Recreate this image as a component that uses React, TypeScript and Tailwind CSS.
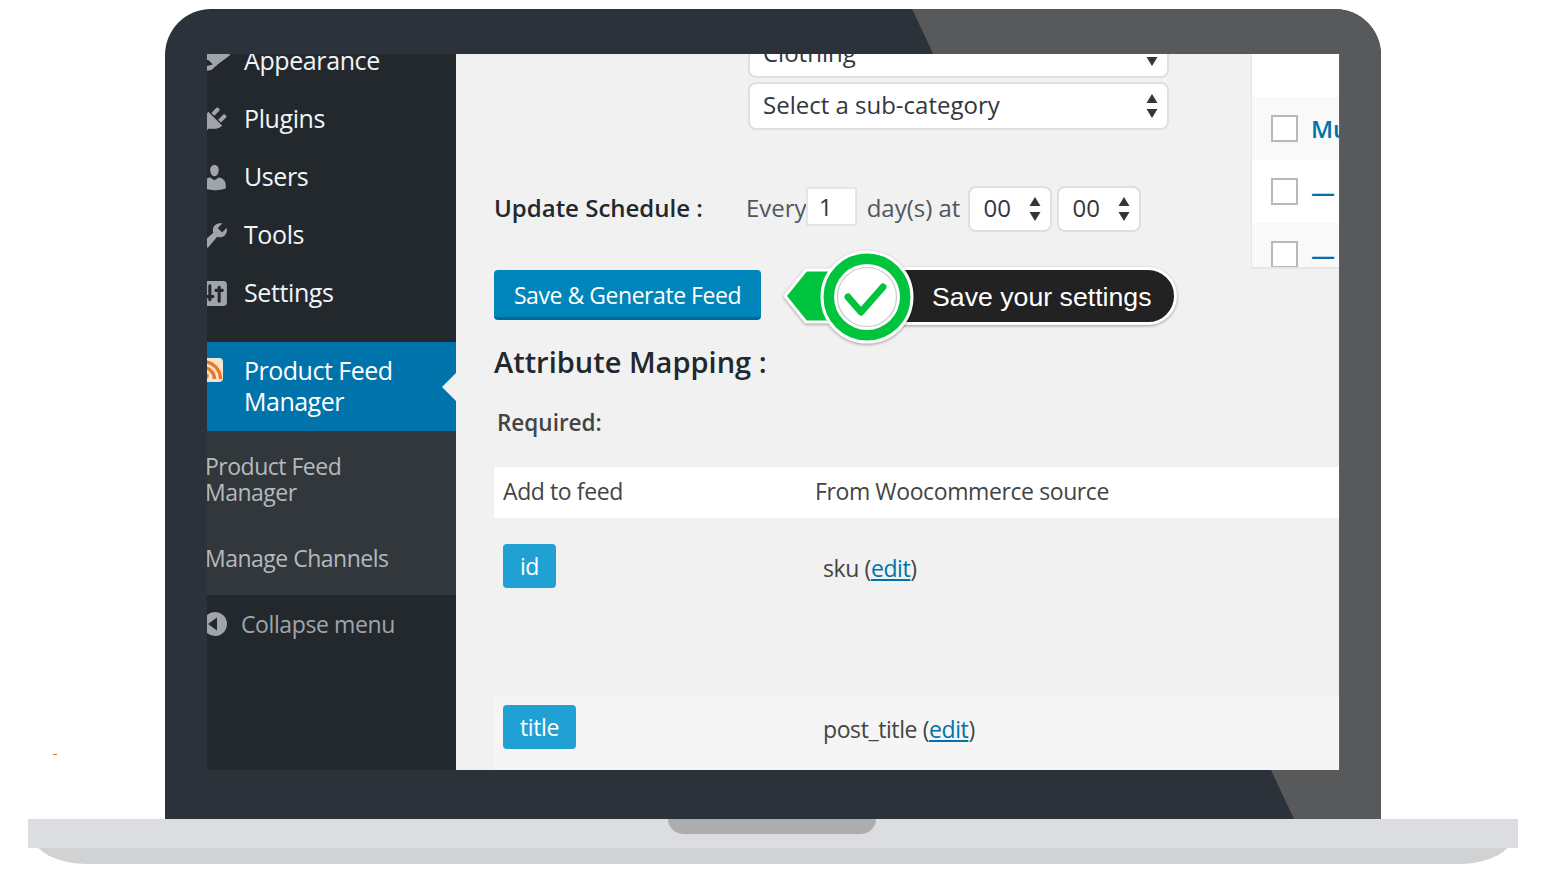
function Icon({ d, className }: { d: string; className: string }) {
  return (
    <svg viewBox="0 0 20 20" className={className} fill="#a0a5aa">
      <path d={d} />
    </svg>
  );
}

const menuItems = [
  {
    label: "Appearance",
    d: "M5 4h15v2l-8 6-4 3.5-3 .5v-3l4-1-3-3H5z",
  },
  {
    label: "Plugins",
    d: "M13.11 4.36L9.87 7.6 8 5.73l3.24-3.24c.35-.34 1.05-.2 1.56.32.52.51.66 1.21.31 1.55zm-8 1.77l.91-1.12 9.01 9.01-1.19.84c-.71.71-2.63 1.16-3.82 1.16H6.14L4.9 17.26c-.59.59-1.54.59-2.12 0-.59-.58-.59-1.53 0-2.12l1.24-1.24v-3.88c0-1.13.4-3.19 1.09-3.89zm7.26 3.97l3.24-3.24c.34-.35 1.04-.21 1.55.31.52.51.66 1.21.31 1.55l-3.24 3.25z",
  },
  {
    label: "Users",
    d: "M10 9.25c-2.27 0-2.73-3.44-2.73-3.44C7 4.02 7.82 2 9.97 2c2.16 0 2.98 2.02 2.71 3.81 0 0-.41 3.44-2.68 3.44zm0 2.57L12.72 10c2.39 0 4.52 2.33 4.52 4.53v2.49s-3.65 1.13-7.24 1.13c-3.65 0-7.24-1.13-7.24-1.13v-2.49c0-2.25 1.94-4.48 4.47-4.48z",
  },
  {
    label: "Tools",
    d: "M16.68 9.77c-1.34 1.34-3.3 1.67-4.95.99l-5.41 6.52c-.99.99-2.59.99-3.58 0s-.99-2.59 0-3.57l6.52-5.42c-.68-1.65-.35-3.61.99-4.95 1.28-1.28 3.12-1.62 4.72-1.06l-2.89 2.89 2.82 2.82 2.86-2.87c.53 1.58.18 3.39-1.08 4.67z",
  },
  {
    label: "Settings",
    d: "M18 16V4c0-1.1-.9-2-2-2H4c-1.1 0-2 .9-2 2v12c0 1.1.9 2 2 2h12c1.1 0 2-.9 2-2zM8 11h1c.55 0 1 .45 1 1s-.45 1-1 1H8v1c0 .55-.45 1-1 1s-1-.45-1-1v-1H5c-.55 0-1-.45-1-1s.45-1 1-1h1V5c0-.55.45-1 1-1s1 .45 1 1v6zm7-2h-1v6c0 .55-.45 1-1 1s-1-.45-1-1V9h-1c-.55 0-1-.45-1-1s.45-1 1-1h1V6c0-.55.45-1 1-1s1 .45 1 1v1h1c.55 0 1 .45 1 1s-.45 1-1 1z",
  },
];

function SelectArrows({ onlyDown }: { onlyDown?: boolean }) {
  return (
    <svg viewBox="0 0 12 24" className="h-[24px] w-[12px]" fill="#32373c">
      {!onlyDown && <path d="M6 0l5.5 9H.5z" />}
      <path d="M6 24l-5.5-9h11z" />
    </svg>
  );
}

function Sidebar() {
  return (
    <aside className="flex h-[calc(100%+22px)] w-[249px] shrink-0 -mt-[22px] flex-col overflow-hidden bg-[#23282d]">
      {menuItems.map((item) => (
        <div key={item.label} className="flex h-[58px] shrink-0 items-center text-[25px] tracking-[-0.4px] text-[#f0f5fa]">
          <Icon d={item.d} className="-ml-[8px] mr-[14px] h-[31px] w-[31px] shrink-0" />
          {item.label}
        </div>
      ))}

      {/* active item */}
      <div className="relative mt-[20px] flex h-[89px] shrink-0 bg-[#0073aa] pt-[13px] text-[25px] leading-[31px] tracking-[-0.5px] text-white">
        <svg viewBox="0 0 24 24" className="-ml-[7px] mr-[20px] mt-[3px] h-[24px] w-[24px] shrink-0">
          <rect x="0" y="0" width="23" height="24" rx="4" fill="#f3e3d3" />
          <circle cx="6" cy="18" r="2.8" fill="#e8791f" />
          <path d="M3 9.5a11.5 11.5 0 0 1 11.5 11.5M3 3.5a17.5 17.5 0 0 1 17.5 17.5" fill="none" stroke="#e8791f" strokeWidth="3.4" />
        </svg>
        <div>
          Product Feed
          <br />
          Manager
        </div>
        <div className="absolute right-0 top-[31px] h-0 w-0 border-y-[14px] border-r-[14px] border-y-transparent border-r-[#f1f1f1]" />
      </div>

      <div className="flex h-[164px] shrink-0 flex-col bg-[#32373c] text-[23px] tracking-[-0.5px] text-[#b4b9be]">
        <div className="-ml-[2px] mt-[22px] leading-[26px]">
          Product Feed
          <br />
          Manager
        </div>
        <div className="-ml-[2px] mt-[37px] leading-[32px]">Manage Channels</div>
      </div>

      <div className="mt-[13px] flex h-[32px] shrink-0 items-center text-[23px] tracking-[-0.4px] text-[#a0a5aa]">
        <svg viewBox="0 0 24 24" className="-ml-[4px] mr-[14px] h-[24px] w-[24px] shrink-0">
          <circle cx="12" cy="12" r="12" fill="#a0a5aa" />
          <path d="M5 12l9-6.5v13z" fill="#23282d" />
        </svg>
        Collapse menu
      </div>
    </aside>
  );
}

function SelectBox({ label, className, onlyDown }: { label: string; className: string; onlyDown?: boolean }) {
  return (
    <div className={`flex items-center justify-between rounded-[8px] border-2 border-[#dfdfdf] bg-white text-[#32373c] ${className}`}>
      <span className="-mt-[2px]">{label}</span>
      <SelectArrows onlyDown={onlyDown} />
    </div>
  );
}

function SaveCallout() {
  return (
    <div className="absolute left-[330px] top-[220px] h-[96px] w-[392px]">
      <div className="absolute left-[95px] top-[17px] flex h-[58px] w-[296px] items-center rounded-r-full border-[3px] border-white bg-[#222222] pl-[48px] pt-[3px] font-['Liberation_Sans',Arial,sans-serif] text-[26.7px] text-white shadow-[0_1px_3px_rgba(0,0,0,0.35)]">
        Save your settings
      </div>
      <svg viewBox="0 0 130 96" className="absolute left-0 top-0 h-[96px] w-[130px] overflow-visible" style={{ filter: "drop-shadow(0 1px 1.5px rgba(0,0,0,.35))" }}>
        <path d="M-1 46L20 20h31v52H20z" fill="#00c43d" stroke="#fff" strokeWidth="3" strokeLinejoin="miter" />
        <circle cx="81" cy="47" r="45" fill="#00c43d" stroke="#fff" strokeWidth="3" />
        <circle cx="81" cy="47" r="33" fill="#fff" />
        <circle cx="81" cy="47" r="29.5" fill="none" stroke="#c9c9c9" strokeWidth="1.2" />
        <path d="M62 47l13 15 22-25" fill="none" stroke="#00c43d" strokeWidth="7" strokeLinecap="round" strokeLinejoin="round" />
      </svg>
    </div>
  );
}

function SidePanel() {
  const rows = ["bg-white h-[43px]", "bg-[#f9f9f9] h-[63px]", "bg-white h-[63px]", "bg-[#f9f9f9] h-[45px]"];
  return (
    <div className="absolute right-0 top-[24px] h-[214px] w-[88px] overflow-hidden border-b border-l border-[#e5e5e5] bg-white shadow-[0_1px_1px_rgba(0,0,0,0.04)]">
      <div className={rows[0]} />
      {["Mu", "—", "—"].map((text, i) => (
        <div key={i} className={`flex items-start pl-[19px] pt-[18px] ${rows[i + 1]}`}>
          <span className="h-[27px] w-[27px] shrink-0 border-2 border-[#b4b9be] bg-white" />
          <span className="ml-[13px] whitespace-nowrap text-[24px] font-semibold leading-[27px] text-[#0073aa]">{text}</span>
        </div>
      ))}
    </div>
  );
}

function MainContent() {
  return (
    <main className="relative -mt-[24px] h-[calc(100%+24px)] min-w-0 flex-1 overflow-hidden bg-[#f1f1f1] pl-[38px] text-[#32373c]">
      <SidePanel />
      <div className="ml-[254px] flex w-[421px] flex-col gap-[4px]">
        <SelectBox label="Clothing" onlyDown className="h-[48px] pl-[13px] pr-[9px] text-[24px]" />
        <SelectBox label="Select a sub-category" className="h-[48px] pl-[13px] pr-[9px] text-[24px]" />
      </div>

      <div className="mt-[56px] flex h-[46px] items-center text-[24px]">
        <span className="-mt-[2px] w-[252px] font-semibold text-[#23282d]">Update Schedule :</span>
        <span className="-mt-[2px] text-[#50575e]">Every</span>
        <span className="-ml-[1px] -mt-[5px] flex h-[39px] w-[51px] items-center border-2 border-[#e5e5e5] bg-white pl-[11px]">1</span>
        <span className="-mt-[2px] ml-[10px] text-[#50575e]">day(s) at</span>
        <SelectBox label="00" className="ml-[8px] h-[46px] w-[84px] pl-[13px] pr-[9px]" />
        <SelectBox label="00" className="ml-[5px] h-[46px] w-[84px] pl-[13px] pr-[9px]" />
      </div>

      <button className="mt-[38px] flex h-[50px] w-[267px] items-center justify-center rounded-[4px] border-b-[3px] border-[#006799] bg-[#0085ba] pt-[3px] text-[23px] tracking-[-0.45px] text-white">
        Save &amp; Generate Feed
      </button>
      <SaveCallout />

      <h2 className="mt-[22px] flex h-[40px] items-center text-[29px] font-semibold text-[#23282d]">Attribute Mapping :</h2>
      <div className="ml-[3px] mt-[26px] flex h-[30px] items-center pb-[1px] text-[22.5px] font-semibold text-[#444]">Required:</div>

      <div className="mt-[29px] text-[23px] tracking-[-0.4px]">
        <div className="grid h-[51px] grid-cols-[321px_1fr] items-center bg-white pb-[3px] text-[#444]">
          <div className="pl-[9px]">Add to feed</div>
          <div>From Woocommerce source</div>
        </div>
        <div className="grid h-[178px] grid-cols-[321px_1fr]">
          <div className="pl-[9px] pt-[26px]">
            <span className="flex h-[44px] w-[53px] items-center justify-center rounded-[4px] bg-[#21a1d3] text-white">id</span>
          </div>
          <div className="pl-[8px] pt-[33px] leading-[34px] text-[#444]">
            sku (<a className="text-[#0073aa] underline">edit</a>)
          </div>
        </div>
        <div className="grid h-[90px] grid-cols-[321px_1fr] bg-[#f5f5f5]">
          <div className="pl-[9px] pt-[9px]">
            <span className="flex h-[44px] w-[73px] items-center justify-center rounded-[4px] bg-[#21a1d3] text-white">title</span>
          </div>
          <div className="pl-[8px] pt-[16px] leading-[34px] text-[#444]">
            post_title (<a className="text-[#0073aa] underline">edit</a>)
          </div>
        </div>
      </div>
    </main>
  );
}

export default function App() {
  return (
    <div className="relative h-[893px] w-[1548px] overflow-hidden bg-white pt-[9px] font-['Open_Sans',sans-serif]">
      <div className="absolute left-[53px] top-[754px] h-px w-[4px] bg-[#f26522]" />

      {/* laptop lid */}
      <div className="relative ml-[165px] h-[810px] w-[1216px] overflow-hidden rounded-t-[46px] bg-[#2b323a] pl-[42px] pt-[45px]">
        <div className="absolute inset-0 bg-[#58595b] [clip-path:polygon(747px_0,100%_0,100%_100%,1129px_100%)]" />
        <div className="relative flex h-[716px] w-[1133px] overflow-hidden border-r border-[#1b7aa8]">
          <Sidebar />
          <MainContent />
        </div>
      </div>

      {/* laptop base */}
      <div className="relative ml-[28px] flex h-[29px] w-[1490px] justify-center bg-[#dcdde0]">
        <div className="-ml-[2px] h-[15px] w-[208px] rounded-b-[18px] bg-[#adadad]" />
      </div>
      <div className="ml-[28px] h-[16px] w-[1490px] overflow-hidden">
        <div className="mx-[4px] -mt-[14px] h-[30px] rounded-bl-[55px_30px] rounded-br-[55px_30px] bg-[#d1d2d4]" />
      </div>
    </div>
  );
}
